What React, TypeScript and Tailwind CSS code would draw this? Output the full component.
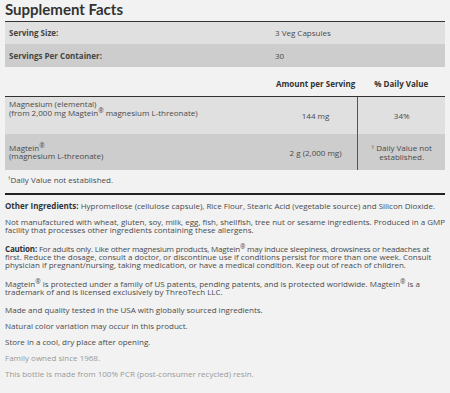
export default function App() {
  return (
    <main className="w-[450px] h-[393px] overflow-hidden bg-[#f2f2f2] px-[5px] font-['Open_Sans','Liberation_Sans',sans-serif] text-[#4a4a4a]">
      {/* Title */}
      <h2 className="h-[21px] font-['Lato','Liberation_Sans',sans-serif] text-[15px] font-bold leading-[19px] text-[#333]">Supplement Facts</h2>

      {/* Serving info */}
      <div className="border-t border-[#333] text-[8px]">
        <div className="flex h-[22px] items-center bg-[#e0e0e0]">
          <div className="w-[270px] pl-[4px] font-bold text-[#444]">Serving Size:</div>
          <div>3 Veg Capsules</div>
        </div>
        <div className="flex h-[23px] items-center bg-[#cdcdcd]">
          <div className="w-[270px] pl-[4px] font-bold text-[#444]">Servings Per Container:</div>
          <div>30</div>
        </div>
      </div>

      {/* Header */}
      <div className="flex h-[29px] items-end pb-[8px] text-[8px] font-bold leading-[8px] text-[#333]">
        <div className="w-[270px]" />
        <div className="w-[84px] text-center">Amount per Serving</div>
        <div className="w-[88px] text-center">% Daily Value</div>
      </div>

      {/* Nutrients */}
      <div className="border-t border-[#333] text-[8px] leading-[9px]">
        <div className="flex h-[37px] bg-[#e0e0e0]">
          <div className="w-[270px] pl-[4px] pt-[2px]">
            <div>Magnesium (elemental)</div>
            <div>
              (from 2,000 mg Magtein<sup className="text-[6.5px]">®</sup> magnesium L-threonate)
            </div>
          </div>
          <div className="flex w-[84px] items-center justify-center">144 mg</div>
          <div className="flex w-[88px] items-center justify-center border-l border-[#555]">34%</div>
        </div>
        <div className="flex h-[36px] bg-[#cdcdcd]">
          <div className="flex w-[270px] flex-col justify-center pl-[4px] leading-[8px]">
            <div>
              Magtein<sup className="text-[6.5px]">®</sup>
            </div>
            <div>(magnesium L-threonate)</div>
          </div>
          <div className="flex w-[84px] items-center justify-center">2 g (2,000 mg)</div>
          <div className="flex w-[88px] flex-col items-center justify-center border-l border-[#555] text-center leading-[8px]">
            <div>
              <span className="relative -top-[2px] text-[5px]">†</span> Daily Value not
            </div>
            <div>established.</div>
          </div>
        </div>
      </div>

      {/* Footnote */}
      <div className="flex h-[23px] items-center pl-[3px] pb-[4px] text-[8px] leading-[8px]">
        <span className="relative -top-[2px] text-[5px]">†</span>Daily Value not established.
      </div>
      <div className="border-t-2 border-[#222]" />

      {/* Notes */}
      <div className="-mr-[4px] mt-[7px] flex flex-col text-[8px] leading-[8px]">
        <p>
          <span className="font-bold text-[#333]">Other Ingredients:</span> Hypromellose (cellulose capsule), Rice Flour, Stearic Acid (vegetable source) and Silicon Dioxide.
        </p>
        <p className="mt-[8px]">
          Not manufactured with wheat, gluten, soy, milk, egg, fish, shellfish, tree nut or sesame ingredients. Produced in a GMP facility that processes other ingredients containing these allergens.
        </p>
        <p className="mt-[11px] whitespace-nowrap">
          <span className="tracking-[-0.2px]">
            <span className="font-bold text-[#333]">Caution:</span> For adults only. Like other magnesium products, Magtein<sup className="text-[6.5px]">®</sup> may induce sleepiness, drowsiness or headaches at
          </span>
          <br />
          first. Reduce the dosage, consult a doctor, or discontinue use if conditions persist for more than one week. Consult
          <br />
          physician if pregnant/nursing, taking medication, or have a medical condition. Keep out of reach of children.
        </p>
        <p className="mt-[11px]">
          Magtein<sup className="text-[6.5px]">®</sup> is protected under a family of US patents, pending patents, and is protected worldwide. Magtein<sup className="text-[6.5px]">®</sup> is a trademark of and is licensed exclusively by ThreoTech LLC.
        </p>
        <p className="mt-[10px]">Made and quality tested in the USA with globally sourced ingredients.</p>
        <p className="mt-[8px]">Natural color variation may occur in this product.</p>
        <p className="mt-[8px]">Store in a cool, dry place after opening.</p>
        <p className="mt-[8px] text-[#999]">Family owned since 1968.</p>
        <p className="mt-[8px] text-[#999]">This bottle is made from 100% PCR (post-consumer recycled) resin.</p>
      </div>
    </main>
  );
}
